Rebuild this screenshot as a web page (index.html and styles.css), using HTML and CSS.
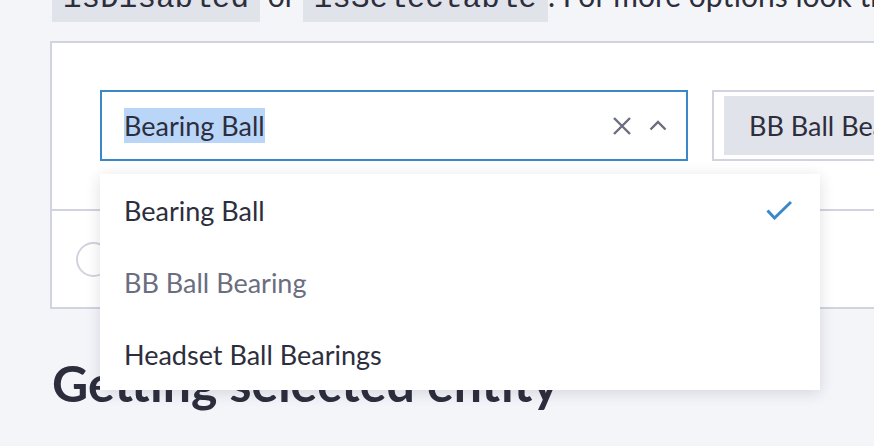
FILE: index.html
```html
<!DOCTYPE html>
<html>
<head>
<meta charset="utf-8">
<link rel="stylesheet" href="styles.css">
</head>
<body>
<div class="page">
  <p class="intro"><code class="code">isDisabled</code> or <code class="code">isSelectable</code>. For more options look through the documentation</p>

  <div class="panel">
    <div class="panel-top">
      <div class="select is-open">
        <span class="value"><span class="selected-text">Bearing Ball</span></span>
        <span class="icons">
          <svg class="icon-x" width="20" height="20" viewBox="0 0 20 20"><path d="M2 2L18 18M18 2L2 18" stroke="#6b6d80" stroke-width="2.4" fill="none"/></svg>
          <svg class="icon-chev" width="18" height="11" viewBox="0 0 18 11"><path d="M1.5 9.5L9 2L16.5 9.5" stroke="#6b6d80" stroke-width="2.4" fill="none"/></svg>
        </span>
        <ul class="menu">
          <li class="item">Bearing Ball<svg class="check" width="26" height="20" viewBox="0 0 26 20"><path d="M1.5 10.5L8.5 18L25 2" stroke="#3b88c8" stroke-width="3" fill="none"/></svg></li>
          <li class="item is-muted">BB Ball Bearing</li>
          <li class="item">Headset Ball Bearings</li>
        </ul>
      </div>
      <div class="multi">
        <span class="tag">BB Ball Bearing</span>
      </div>
    </div>
    <div class="panel-bottom">
      <span class="radio"></span>
    </div>
  </div>

  <h2 class="heading">Getting selected entity</h2>
</div>
</body>
</html>
```

FILE: styles.css
```css
html, body {
  margin: 0;
  padding: 0;
}
body {
  background: #f4f5f9;
  width: 874px;
  height: 446px;
  overflow: hidden;
  font-family: Lato, "Noto Sans", sans-serif;
  color: #2d2e3d;
}
.page {
  padding-left: 50px;
}
.intro {
  margin: -27px 0 0 2px;
  white-space: nowrap;
  font-size: 30px;
  line-height: 44px;
  color: #2d2e3d;
}
.code {
  font-family: "Liberation Mono", monospace;
  font-size: 31px;
  background: #e1e3ea;
  padding: 6px 11px 6px 11px;
}
.panel {
  margin-top: 20px;
  width: 900px;
  background: #fff;
  border: 2px solid #d2d3de;
}
.panel-top {
  display: flex;
  gap: 24px;
  padding: 47px 0 48px 48px;
  border-bottom: 2px solid #d2d3de;
}
.select {
  position: relative;
  box-sizing: border-box;
  flex: none;
  width: 588px;
  height: 71px;
  border: 2px solid #3b88c8;
  display: flex;
  align-items: center;
  justify-content: space-between;
  padding: 0 19px 0 22px;
  font-size: 27px;
}
.selected-text {
  background: #b9d6f9;
  display: inline-block;
  line-height: 35px;
}
.icons {
  display: flex;
  align-items: center;
  gap: 17px;
}
.icons svg {
  display: block;
}
.menu {
  position: absolute;
  top: 82px;
  left: -2px;
  width: 720px;
  margin: 0;
  padding: 0;
  list-style: none;
  background: #fff;
  box-shadow: 0 3px 14px rgba(30, 32, 60, 0.14);
  z-index: 2;
}
.item {
  height: 72px;
  display: flex;
  align-items: center;
  justify-content: space-between;
  padding: 0 28px 0 24px;
  font-size: 27px;
  color: #2d2e3d;
}
.item.is-muted {
  color: #6b6d80;
}
.multi {
  box-sizing: border-box;
  flex: none;
  width: 300px;
  height: 71px;
  border: 2px solid #d2d3de;
  padding: 4px 10px;
}
.tag {
  display: flex;
  align-items: center;
  height: 59px;
  background: #e1e3ea;
  padding-left: 25px;
  font-size: 27px;
  white-space: nowrap;
}
.panel-bottom {
  height: 96px;
  display: flex;
  align-items: center;
  padding-left: 24px;
}
.radio {
  box-sizing: border-box;
  width: 35px;
  height: 35px;
  border-radius: 50%;
  border: 2px solid #d2d3de;
}
.heading {
  margin: 44px 0 0 2px;
  font-size: 50px;
  font-weight: 700;
  line-height: 60px;
  color: #2d2e3d;
}
```
